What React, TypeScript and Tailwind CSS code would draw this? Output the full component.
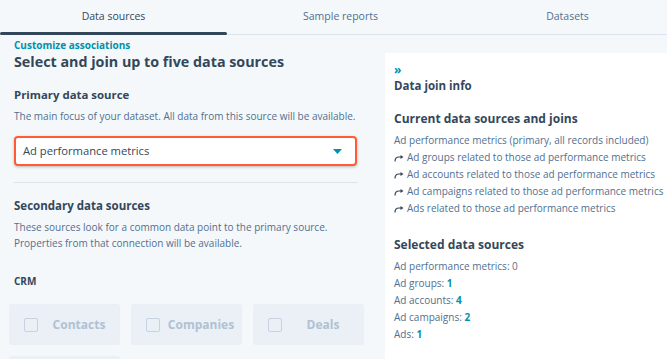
import React from 'react';

const font = { fontFamily: '"Open Sans", "Noto Sans", sans-serif' };

const joins = [
  'Ad groups related to those ad performance metrics',
  'Ad accounts related to those ad performance metrics',
  'Ad campaigns related to those ad performance metrics',
  'Ads related to those ad performance metrics',
];

const selected: [string, string][] = [
  ['Ad groups', '1'],
  ['Ad accounts', '4'],
  ['Ad campaigns', '2'],
  ['Ads', '1'],
];

function JoinArrow() {
  return (
    <svg width="10" height="8" viewBox="0 0 10 8" className="mr-[3px] inline-block shrink-0">
      <path d="M1 7.5 Q1 3 5 3 H8" fill="none" stroke="#33475b" strokeWidth="1.2" />
      <path d="M6.5 1 L9.5 3 L6.5 5 Z" fill="#33475b" />
    </svg>
  );
}

function Card({ label }: { label: string }) {
  return (
    <div className="flex h-[41px] items-center rounded-[3px] bg-[#eaf0f6] pl-[15px]">
      <span className="h-[14px] w-[14px] shrink-0 rounded-[2px] border border-[#c6d2df]" />
      <span className="flex-1 text-center text-[12px] font-bold text-[#b0c1d4]">{label}</span>
    </div>
  );
}

export default function App() {
  return (
    <div className="h-[359px] w-[667px] overflow-hidden bg-[#f5f8fa] text-[#33475b]" style={font}>
      <div className="flex h-[35px] border-b border-[#dbe3ec]">
        <div className="relative flex w-[227px] shrink-0 items-center justify-center text-[10.5px] text-[#33475b]">
          Data sources
          <span className="absolute bottom-[-1px] left-0 h-[3px] w-full rounded-full bg-[#33475b]" />
        </div>
        <div className="flex w-[227px] shrink-0 items-center justify-center text-[10.5px] text-[#516f90]">Sample reports</div>
        <div className="flex w-[227px] shrink-0 items-center justify-center text-[10.5px] text-[#516f90]">Datasets</div>
      </div>

      <div className="flex">
        <div className="w-[385px] shrink-0 pl-[14px]">
          <div className="pt-[3px] text-[10px] font-bold leading-[14px] text-[#0091ae]">Customize associations</div>
          <h1 className="text-[14.3px] font-bold leading-[20px]">Select and join up to five data sources</h1>

          <h2 className="mt-[14px] text-[11.4px] font-bold leading-[18px]">Primary data source</h2>
          <p className="mt-[4px] text-[10px] leading-[16px] text-[#516f90]">The main focus of your dataset. All data from this source will be available.</p>

          <div className="mt-[12px] flex h-[30px] w-[343px] items-center rounded-[4px] border-2 border-[#ff5c35] bg-white pl-[7px] pr-[13px] shadow-[0_1px_3px_rgba(0,0,0,0.25)]">
            <span className="flex-1 text-[11.2px] text-[#33475b]">Ad performance metrics</span>
            <svg width="9" height="5" viewBox="0 0 9 5">
              <path d="M0 0 H9 L4.5 5 Z" fill="#0091ae" />
            </svg>
          </div>

          <div className="mt-[16px] h-px w-[344px] bg-[#dfe3eb]" />

          <h2 className="mt-[14px] text-[11.5px] font-bold leading-[18px]">Secondary data sources</h2>
          <p className="mt-[4px] text-[10px] leading-[16px] text-[#516f90]">
            These sources look for a common data point to the primary source.
            <br />
            Properties from that connection will be available.
          </p>

          <div className="mt-[23px] text-[10px] font-bold leading-[14px]">CRM</div>

          <div className="-ml-[5px] mt-[16px] grid w-[355px] grid-cols-3 gap-[11px]">
            <Card label="Contacts" />
            <Card label="Companies" />
            <Card label="Deals" />
            <Card label="Tickets" />
          </div>
        </div>

        <div className="mt-[18px] h-[400px] flex-1 bg-white pl-[9px]">
          <div className="pt-[10px] text-[12px] font-bold leading-[14px] text-[#0091ae]">»</div>
          <h2 className="mt-[1px] text-[11.5px] font-bold leading-[16px]">Data join info</h2>

          <h3 className="mt-[16px] text-[12px] font-bold leading-[18px]">Current data sources and joins</h3>
          <div className="mt-[4px] text-[10px] leading-[17px] text-[#516f90]">
            <div className="whitespace-nowrap">Ad performance metrics (primary, all records included)</div>
            {joins.map((j) => (
              <div key={j} className="flex items-center whitespace-nowrap">
                <JoinArrow />
                {j}
              </div>
            ))}
          </div>

          <h3 className="mt-[19px] text-[12px] font-bold leading-[18px]">Selected data sources</h3>
          <div className="mt-[4px] text-[10px] leading-[17px] text-[#516f90]">
            <div>Ad performance metrics: 0</div>
            {selected.map(([k, v]) => (
              <div key={k}>
                {k}: <span className="font-bold text-[#0091ae]">{v}</span>
              </div>
            ))}
          </div>
        </div>
      </div>
    </div>
  );
}
